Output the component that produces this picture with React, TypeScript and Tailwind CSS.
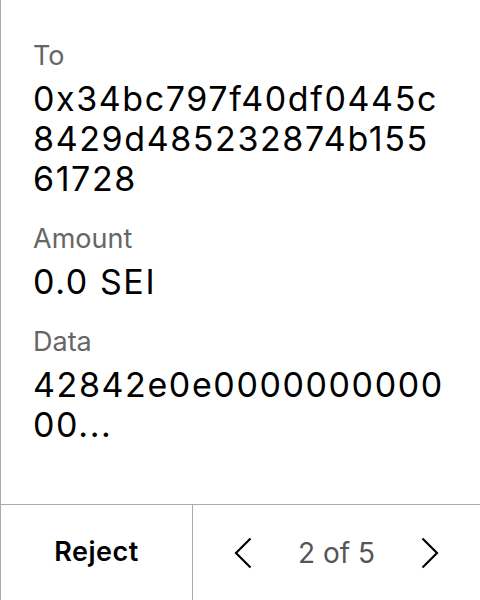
import React from "react";

function Field({ label, value }: { label: string; value: string }) {
  return (
    <div className="flex flex-col gap-[7px]">
      <div className="text-[27px] leading-[32px] text-[#666666]">{label}</div>
      <div className="text-[34px] leading-[40px] tracking-[1.6px] text-black break-all">{value}</div>
    </div>
  );
}

export default function App() {
  return (
    <div
      className="w-[480px] h-[600px] bg-white flex flex-col border-l border-[#aaaaaa]"
      style={{ fontFamily: "Inter, 'Noto Sans', sans-serif" }}
    >
      <div className="flex-1 flex flex-col gap-[24px] pl-[32px] pr-[32px] pt-[40px]">
        <Field label="To" value="0x34bc797f40df0445c8429d485232874b15561728" />
        <Field label="Amount" value="0.0 SEI" />
        <Field label="Data" value="42842e0e000000000000..." />
      </div>
      <div className="h-[96px] flex border-t border-[#aaaaaa]">
        <div className="w-[192px] flex items-center justify-center border-r border-[#aaaaaa] text-[27px] tracking-[0.5px] font-semibold text-black">
          Reject
        </div>
        <div className="flex-1 flex items-center justify-center gap-[46px]">
          <svg width="18" height="32" viewBox="0 0 18 32" fill="none">
            <path d="M16.5 1.5 L2 16 L16.5 30.5" stroke="black" strokeWidth="2.2" />
          </svg>
          <span className="text-[28px] text-[#555555]">2 of 5</span>
          <svg width="18" height="32" viewBox="0 0 18 32" fill="none">
            <path d="M1.5 1.5 L16 16 L1.5 30.5" stroke="black" strokeWidth="2.2" />
          </svg>
        </div>
      </div>
    </div>
  );
}
